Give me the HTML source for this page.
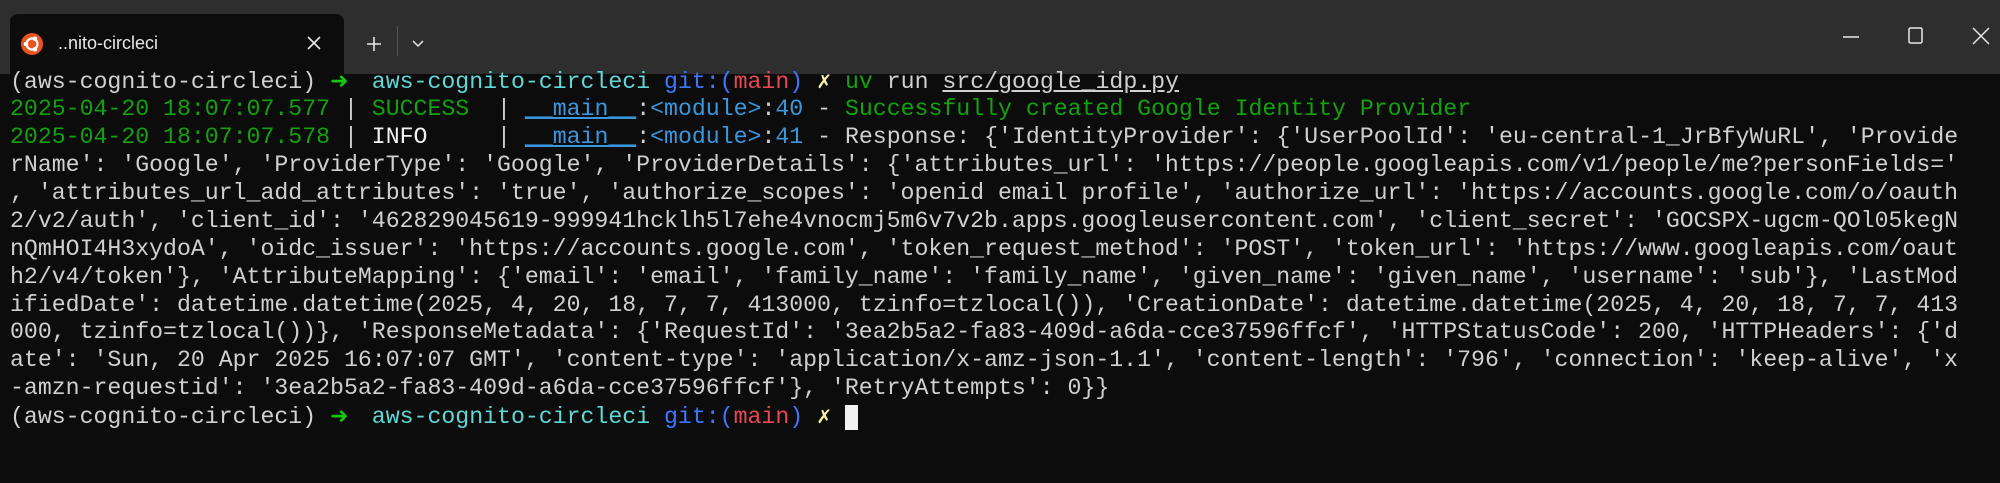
<!DOCTYPE html>
<html><head><meta charset="utf-8"><style>
*{margin:0;padding:0;box-sizing:border-box}
html,body{width:2000px;height:483px;overflow:hidden;background:#0c0c0c}
#bar{position:absolute;left:0;top:0;width:2000px;height:74px;background:#2e2e2e}
#tab{position:absolute;left:10px;top:14px;width:334px;height:60px;background:#0c0c0c;border-radius:8px 8px 0 0}
.t{position:absolute;font-family:"Liberation Sans",sans-serif;color:#e8e8e8}
#term{position:absolute;left:10px;top:68px;font-family:"Liberation Mono",monospace;font-size:23.2px;color:#d0d0d0}
#term div{height:27.95px;line-height:27.95px;white-space:pre}
.g{color:#16c60c;display:inline-block;width:13.92px;font-family:"DejaVu Sans",sans-serif;font-weight:bold;font-size:22px}
.dg{color:#13a10e}.c{color:#61d6d6}.b{color:#3b78ff}.r{color:#e74856}.y{color:#f9f1a5}.bl{color:#3a96dd}.u{text-decoration:underline}.w{color:#f2f2f2}
.cur{display:inline-block;width:13px;height:25px;background:#f2f2f2;vertical-align:middle}
</style></head><body>
<div id="bar"></div>
<div id="tab"></div>
<svg style="position:absolute;left:20px;top:32px" width="24" height="24" viewBox="0 0 24 24"><circle cx="12" cy="12" r="11" fill="#e95420"/><circle cx="12" cy="12" r="5.5" fill="none" stroke="#fff" stroke-width="2.2"/><circle cx="6" cy="12" r="2.3" fill="#fff"/><circle cx="15" cy="6.8" r="2.3" fill="#fff"/><circle cx="15" cy="17.2" r="2.3" fill="#fff"/></svg>
<div class="t" style="left:58px;top:33px;font-size:18px">..nito-circleci</div>
<svg style="position:absolute;left:306px;top:35px" width="16" height="16"><path d="M2 2L14 14M14 2L2 14" stroke="#e8e8e8" stroke-width="1.6"/></svg>
<svg style="position:absolute;left:366px;top:36px" width="16" height="16"><path d="M8 1V15M1 8H15" stroke="#e8e8e8" stroke-width="1.6"/></svg>
<div style="position:absolute;left:397px;top:26px;width:1px;height:30px;background:#555"></div>
<svg style="position:absolute;left:411px;top:39px" width="14" height="10"><path d="M2 2L7 7L12 2" fill="none" stroke="#e8e8e8" stroke-width="1.5"/></svg>
<svg style="position:absolute;left:1843px;top:34px" width="16" height="6"><path d="M0 3H16" stroke="#e8e8e8" stroke-width="1.5"/></svg>
<svg style="position:absolute;left:1908px;top:26px" width="16" height="20"><rect x="1" y="2" width="13" height="15" rx="1.5" fill="none" stroke="#e8e8e8" stroke-width="1.5"/></svg>
<svg style="position:absolute;left:1972px;top:27px" width="18" height="18"><path d="M1 1L17 17M17 1L1 17" stroke="#e8e8e8" stroke-width="1.5"/></svg>
<div id="term"><div>(aws-cognito-circleci) <span class="g">➜</span>  <span class="c">aws-cognito-circleci</span> <span class="b">git:(</span><span class="r">main</span><span class="b">)</span> <span class="y">✗</span> <span class="dg">uv</span> run <span class="u">src/google_idp.py</span></div><div><span class="dg">2025-04-20 18:07:07.577</span> | <span class="dg">SUCCESS</span>  | <span class="bl u">__main__</span>:<span class="bl">&lt;module&gt;</span>:<span class="bl">40</span> - <span class="dg">Successfully created Google Identity Provider</span></div><div><span class="dg">2025-04-20 18:07:07.578</span> | <span class="w">INFO</span>     | <span class="bl u">__main__</span>:<span class="bl">&lt;module&gt;</span>:<span class="bl">41</span> - Response: {'IdentityProvider': {'UserPoolId': 'eu-central-1_JrBfyWuRL', 'Provide</div><div>rName': 'Google', 'ProviderType': 'Google', 'ProviderDetails': {'attributes_url': 'https://people.googleapis.com/v1/people/me?personFields='</div><div>, 'attributes_url_add_attributes': 'true', 'authorize_scopes': 'openid email profile', 'authorize_url': 'https://accounts.google.com/o/oauth</div><div>2/v2/auth', 'client_id': '462829045619-999941hcklh5l7ehe4vnocmj5m6v7v2b.apps.googleusercontent.com', 'client_secret': 'GOCSPX-ugcm-QOl05kegN</div><div>nQmHOI4H3xydoA', 'oidc_issuer': 'https://accounts.google.com', 'token_request_method': 'POST', 'token_url': 'https://www.googleapis.com/oaut</div><div>h2/v4/token'}, 'AttributeMapping': {'email': 'email', 'family_name': 'family_name', 'given_name': 'given_name', 'username': 'sub'}, 'LastMod</div><div>ifiedDate': datetime.datetime(2025, 4, 20, 18, 7, 7, 413000, tzinfo=tzlocal()), 'CreationDate': datetime.datetime(2025, 4, 20, 18, 7, 7, 413</div><div>000, tzinfo=tzlocal())}, 'ResponseMetadata': {'RequestId': '3ea2b5a2-fa83-409d-a6da-cce37596ffcf', 'HTTPStatusCode': 200, 'HTTPHeaders': {'d</div><div>ate': 'Sun, 20 Apr 2025 16:07:07 GMT', 'content-type': 'application/x-amz-json-1.1', 'content-length': '796', 'connection': 'keep-alive', 'x</div><div>-amzn-requestid': '3ea2b5a2-fa83-409d-a6da-cce37596ffcf'}, 'RetryAttempts': 0}}</div><div>(aws-cognito-circleci) <span class="g">➜</span>  <span class="c">aws-cognito-circleci</span> <span class="b">git:(</span><span class="r">main</span><span class="b">)</span> <span class="y">✗</span> <span class="cur"></span></div></div>
</body></html>
